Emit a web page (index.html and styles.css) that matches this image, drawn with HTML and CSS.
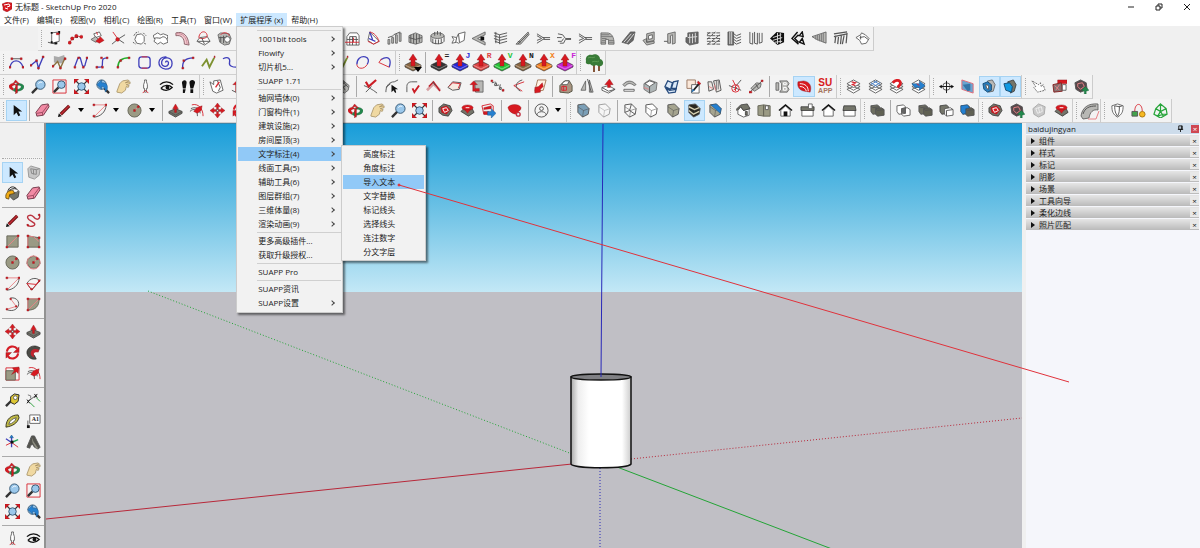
FILE: index.html
```
<!DOCTYPE html>
<html lang="zh-CN">
<head>
    <meta charset="UTF-8">
    <title>无标题 - SketchUp Pro 2020</title>
    <link rel="stylesheet" href="styles.css">
</head>
<body>

<svg class="sprite" aria-hidden="true">
    <!-- 1001bit -->
    <symbol id="rect-points" viewBox="0 0 16 16"><path class="white" d="M5 2l8-1v10l-8 2z"/><path d="M1 12l4 1 5 1"/><path class="ink" d="M4 1h2v2H4zM12 0h2v3h-2zM8 12h3v2H8zM4 11h2v2H4z"/><path class="red" d="M10 2h3v2h-3z"/></symbol>
    <symbol id="polyline" viewBox="0 0 18 16"><path class="red-line" d="M2 13l3-5 6-3 5 1"/><path class="ink" d="M4 9l2-2 1 3zM9 5h3v2H9z"/><circle class="red" cx="2" cy="13" r="2"/><circle class="red" cx="5" cy="8" r="2"/><circle class="red" cx="10" cy="5" r="2"/><circle class="red" cx="16" cy="6" r="2"/></symbol>
    <symbol id="slope" viewBox="0 0 16 16"><path class="white" d="M4 3l6-2 2 4-6 2z"/><path class="grey" d="M1 9l5-3 4 4-4 2z"/><path class="red" d="M6 11l5-5 4 4-5 3z"/><path class="red-line" d="M7 1l1 3"/></symbol>
    <symbol id="cross" viewBox="0 0 16 16"><path d="M1 14l6-5 8-5M8 9l6 4"/><path class="red-line" d="M2 1l5 7"/><circle class="red" cx="7" cy="9" r="2"/></symbol>
    <symbol id="polygon-ring" viewBox="0 0 16 16"><path class="white" d="M5 4l5-1 3 3v5l-3 3-5-1-2-4z"/><path d="M2 5l2-3 3-1M12 2l3 3M1 12l3 2M13 13l2 1" stroke-dasharray="2 1"/></symbol>
    <symbol id="sheet" viewBox="0 0 16 16"><path class="white" d="M0 5l5-3 3 2 3-1 5 2-1 4 1 3-5 2-3-2-3 2-4-3 1-2z"/><path d="M1 8c4-2 6 1 8-1s5 0 6 2"/></symbol>
    <symbol id="tube" viewBox="0 0 16 16"><path d="M1 5c6-1 9 3 9 9l5 1C14 5 9 0 1 2z" fill="#f4c9d0" stroke="#8a6068"/><path d="M1 3c8-1 11 4 12 11" stroke="#c98a96"/></symbol>
    <symbol id="dome" viewBox="0 0 16 16"><path class="white" d="M1 11l3-4 8-1 3 5-6 4z"/><path class="red-line" d="M3 7c1-8 9-8 9-1M3 7c2 2 7 1 9-1"/><path d="M2 11h13M6 7l3 7"/></symbol>
    <symbol id="ring" viewBox="0 0 16 16"><path class="grey" d="M1 4l3-2 9 1 2 5-2 6-5 1-5-3z"/><path class="red-line" d="M4 4c2-3 8-3 9 1"/><path d="M4 6v6M7 5v8M10 5v8M2 7h10"/><circle class="white" cx="11" cy="9" r="3"/></symbol>
    <symbol id="arch" viewBox="0 0 16 16"><path class="white" d="M2 15V6l3-4h8l2 3v10z"/><path d="M5 15V6h7v9M2 9h12M8 6v9"/><path class="red-line" d="M0 12h15M9 7v5"/></symbol>
    <symbol id="sail" viewBox="0 0 16 16"><path class="white" d="M4 1L2 10l6 4 6-3z"/><path class="blue-line" d="M4 1l3 8M3 8l7 3"/><path class="red-line" d="M4 1c5 1 8 5 10 10l-6 3-6-3"/></symbol>
    <symbol id="bars" viewBox="0 0 16 16"><path class="grey" d="M1 9h2v5H1zM5 7h2v6H5zM9 4h2v9H9zM13 2h2v9h-2z"/><path d="M1 7l6-2M7 4l7-3"/></symbol>
    <symbol id="columns" viewBox="0 0 16 16"><path class="grey" d="M1 5l7-3 7 3v7l-7 2-7-2z"/><path d="M3 4v9M6 3v10M9 3v11M12 4v8M1 7l7 2 7-2"/></symbol>
    <symbol id="fence" viewBox="0 0 16 16"><ellipse class="grey" cx="8" cy="5" rx="7" ry="3"/><path d="M1 5v6c1 3 12 4 14 0V5M3 8v5M6 9v5M9 9v5M12 8v5"/><path d="M5 1v4M8 0v4M11 1v4"/></symbol>
    <symbol id="panel" viewBox="0 0 16 16"><path class="white" d="M1 6l5 1 2-4 7-2-1 9-6 3-2-1-5 1 2-4z"/><path d="M6 7l-1 5M8 3l1 9"/></symbol>
    <symbol id="wedge" viewBox="0 0 16 16"><path class="grey" d="M0 8l14-7v3L6 8l8 4v3z"/><path class="ink" d="M9 6h4v4H9z"/></symbol>
    <symbol id="flights" viewBox="0 0 16 16"><path d="M1 2l6 2 8-2M1 5l6 2 8-2M1 8l6 2 8-2M2 11l6 2 7-2M3 1v12M7 4v10"/></symbol>
    <symbol id="ramp" viewBox="0 0 16 16"><path class="grey" d="M1 14L14 1l1 3L6 14z"/><path d="M3 14L14 3M3 11l3 1"/></symbol>
    <symbol id="merge" viewBox="0 0 16 16"><path d="M1 3l8 5-8 5M1 5l5 3-5 2M7 7h8M8 9h7"/></symbol>
    <symbol id="branch" viewBox="0 0 16 16"><path d="M1 3l5 1 3 4h6M1 11h4l2-3M3 13h4l2-4h6M0 7h5"/></symbol>
    <symbol id="spiral-stair" viewBox="0 0 16 16"><path class="grey" d="M1 2h6c6 0 8 5 8 12H9V9H6v5H1z"/><path d="M1 4h9M1 6h12M2 8h5M2 10h4M1 12h5M9 10h6M9 12h6" stroke="#777"/></symbol>
    <symbol id="stairs" viewBox="0 0 16 16"><path class="dark" d="M1 12L10 1h5l-2 9-5 4z"/><path class="pale-line" d="M3 12l8-9M6 13l8-10"/></symbol>
    <symbol id="frame" viewBox="0 0 16 16"><path class="grey" d="M5 3l8-2v9l-8 2zM1 10l4-2v4l8-1v2l-8 2z"/><path class="white" d="M7 5l4-1v4l-4 1z"/></symbol>
    <symbol id="door-frame" viewBox="0 0 16 16"><path class="grey" d="M5 3l8-2v12l-3 1V4L8 5v8H5z"/><path d="M1 11h4"/></symbol>
    <symbol id="window" viewBox="0 0 16 16"><path class="dark" d="M3 2l11-1v12l-9 2-4-3V7h2z"/><path class="pale-line" d="M5 3v10M8 3v10M11 2v10M3 7l10-1"/></symbol>
    <symbol id="weave" viewBox="0 0 16 16"><path d="M1 2h14M1 5h14M1 8h14M1 11h14M1 14h14M1 4l4-3M2 14L15 4M1 9l9-8M8 14l7-5" stroke-dasharray="4 1"/></symbol>
    <symbol id="louvre" viewBox="0 0 16 16"><path class="dark" d="M1 1h6v14H1z"/><path d="M6 2l4 3 5-2M6 5l4 3 5-2M6 8l4 3 5-2M6 11l4 3 5-2"/><path class="pale-line" d="M3 1v13M5 1v13"/></symbol>
    <symbol id="panels" viewBox="0 0 16 16"><path d="M2 1v12l3 1V2M7 1v12l3 1V2M12 2v11l3-1V2"/></symbol>
    <symbol id="lattice" viewBox="0 0 16 16"><path class="ink" d="M0 8l7-7 8 1v10l-7 3z"/><path class="pale-line" d="M3 7l9-3M3 10l10-3M5 12l8-1M8 2v12M11 2v11"/></symbol>
    <symbol id="lattice-open" viewBox="0 0 16 16"><path class="ink-line" d="M7 1L1 8l7 6M8 4L4 8l4 4M12 1L9 5l4 1zM12 8l-3 4 5 2z" stroke-width="1.500"/></symbol>
    <symbol id="joists" viewBox="0 0 16 16"><path class="grey" d="M0 6l15-5v12L5 9z"/><path d="M4 5v4M6 4v6M8 4v7M10 3v8M12 2v10" stroke="#777"/></symbol>
    <symbol id="rafters" viewBox="0 0 16 16"><path d="M1 3l14-2M1 6l14-3M3 5l-1 8M6 5L5 14M9 4l-1 10M12 4l-2 10M15 2l-1 11" stroke-width="1.300"/></symbol>
    <symbol id="hull" viewBox="0 0 16 16"><path class="white" d="M1 7l5-3 1-2 4 2 4 4-3 5-5 1-2-4z"/><path d="M5 7l5-1 4 3M6 5v4"/></symbol>

    <!-- curves -->
    <symbol id="curve-arc" viewBox="0 0 16 16"><path class="blue-line" d="M1 13C3 4 12 4 15 13"/><path d="M3 4h10"/><path class="red" d="M0 12h2v2H0zM14 12h2v2h-2zM2 3h2v2H2zM12 3h2v2h-2z"/></symbol>
    <symbol id="curve-zig" viewBox="0 0 16 16"><path class="blue-line" d="M1 11l6-5 2 8 5-12"/><path class="red" d="M0 10h2v2H0zM6 5h2v2H6zM8 13h2v2H8zM13 1h2v2h-2z"/></symbol>
    <symbol id="curve-smudge" viewBox="0 0 16 16"><path fill="#aaa" stroke="none" d="M2 1l5 1 6-2 1 5-4 4-8-1z"/><path d="M1 12l5-5 3 7 5-11" stroke="#8b7340" stroke-width="1.500"/><path class="red" d="M0 11h2v2H0zM8 13h2v2H8zM13 3h2v2h-2z"/></symbol>
    <symbol id="curve-wave" viewBox="0 0 16 16"><path class="blue-line" d="M2 12L5 4c1-2 3-2 3 0l2 7c1 2 3 1 3-1l2-7"/><path class="red" d="M1 12h2v2H1zM5 2h2v2H5zM10 12h2v2h-2zM14 2h2v2h-2z"/></symbol>
    <symbol id="curve-step" viewBox="0 0 16 16"><path class="blue-line" d="M3 13h3c3 0 3-2 3-5s0-5 5-5"/><path class="red" d="M2 12h2v2H2zM8 12h2v2H8zM7 2h2v2H7zM13 2h2v2h-2z"/></symbol>
    <symbol id="curve-green" viewBox="0 0 16 16"><path d="M2 13C2 7 6 3 14 3" stroke="#27b02b" stroke-width="1.500"/><path class="red" d="M1 12h2v2H1zM13 2h2v2h-2zM4 5h2v2H4z"/></symbol>
    <symbol id="curve-box" viewBox="0 0 16 16"><rect class="blue-line" x="2" y="2" width="12" height="12" rx="3"/><path class="red-line" d="M5 2h6M5 14h6"/></symbol>
    <symbol id="curve-spiral" viewBox="0 0 16 16"><path class="blue-line" d="M8 8c1-3 4-1 3 2-2 4-8 2-7-3C6 1 15 2 15 9c0 4-3 6-7 6-10-1-9-14 1-13"/></symbol>
    <symbol id="curve-quarter" viewBox="0 0 16 16"><path class="blue-line" d="M3 14C2 7 6 3 14 3"/><path class="red" d="M2 13h2v2H2zM13 2h2v2h-2zM3 5h2v2H3z"/></symbol>
    <symbol id="curve-olive" viewBox="0 0 16 16"><path d="M1 12l5-7 3 8 5-10" stroke="#7d9130" stroke-width="2"/><path class="red" d="M14 1h1v2h-1z"/></symbol>
    <symbol id="curve-tail" viewBox="0 0 16 16"><path class="blue-line" d="M1 4c6-3 8 0 7 4s4 5 7 5"/></symbol>
    <symbol id="curve-blob" viewBox="0 0 16 16"><path class="blue-line" d="M2 10C2 4 6 1 11 2c4 1 4 5 2 8"/><path class="red-line" d="M13 10c-3 6-11 5-11 0"/></symbol>
    <symbol id="curve-cone" viewBox="0 0 16 16"><path class="blue-line" d="M4 5c8-5 12-1 9 8"/><path class="red-line" d="M13 13L2 8l3-4"/></symbol>

    <!-- joint push pull: plate takes the text colour -->
    <symbol id="plate" viewBox="0 0 18 18"><path fill="currentColor" stroke="#222" stroke-width=".6" d="M1 11l8-4 8 4v2l-8 4-8-4z"/><path d="M1 11l8 4 8-4" stroke="#fff" stroke-opacity=".4"/><path class="red" d="M7 12V6H5l4-6 4 6h-2v6z"/></symbol>
    <symbol id="tree" viewBox="0 0 20 20"><path d="M10 10v9M15 11v7" stroke="#855539" stroke-width="2"/><path fill="#397b38" stroke="none" d="M2 8C1 3 5 1 8 2c3-2 8 0 8 4 4 1 4 6 1 7-2 1-4-1-5-1-2 2-5 0-6-1-3 1-5-1-4-3z"/><path d="M4 5c3-2 4 1 7-1M8 9c3-2 5 1 7-1" stroke="#5c9c53"/></symbol>

    <!-- camera -->
    <symbol id="orbit" viewBox="0 0 16 16"><path class="green" d="M8 5c4-1 8 1 8 3 0 4-5 5-8 5l1 2-5-3 4-4v3c3 0 5-1 5-3 0-1-3-2-5-1z"/><path class="red" d="M9 4C3 4 0 6 0 8c0 2 2 3 4 4l1-2C1 8 4 6 9 6zM7 1l4 4-2 1v8l-2 2V6L5 4z"/></symbol>
    <symbol id="zoom" viewBox="0 0 16 16"><path d="M1 15l6-6" stroke="#333" stroke-width="2.500"/><circle class="sky" cx="10" cy="6" r="5"/><path d="M8 5c1-2 3-2 4-1" stroke="#fff"/></symbol>
    <symbol id="zoom-window" viewBox="0 0 16 16"><path class="red-line" d="M1 1h14v14H1z"/><path d="M2 14l5-5" stroke="#333" stroke-width="2.500"/><circle class="sky" cx="10" cy="6" r="4"/></symbol>
    <symbol id="extents" viewBox="0 0 16 16"><path d="M2 14l5-5M14 14l-4-4M2 2l4 4M14 2l-4 4" stroke="#333" stroke-width="1.500"/><circle class="sky" cx="8" cy="8" r="4"/><path class="red" d="M0 0h5L0 5zM16 0v5l-5-5zM16 16h-5l5-5zM0 16v-5l5 5z"/></symbol>
    <symbol id="previous" viewBox="0 0 16 16"><path d="M9 9l6 6" stroke="#333" stroke-width="2.500"/><circle class="sky" cx="7" cy="6" r="5"/><path class="blue" d="M2 6l5-5v3c5 0 7 2 6 7l-2 3c0-4-1-6-4-6v3z"/></symbol>
    <symbol id="pan" viewBox="0 0 16 16"><path fill="#f0d9a2" stroke="#a08a5c" stroke-width=".8" d="M1 13l3-8 3-3 6-1 1 1-4 2 5-1v2l-4 1 3 1-1 2-2-1-1 4-4 3-5-1z"/></symbol>
    <symbol id="camera" viewBox="0 0 16 16"><path class="white" d="M7 1h2v2l1 3v4H9v4H7v-4H6V6l1-3z"/><path class="red-line" d="M5 15l3-3 3 3"/></symbol>
    <symbol id="eye" viewBox="0 0 16 16"><path class="ink-line" d="M1 6c4-4 10-4 14 0M2 10c3-4 9-4 12-1-4 4-8 4-12 1" stroke-width="1.400"/><circle class="ink" cx="9" cy="9" r="2"/></symbol>
    <symbol id="feet" viewBox="0 0 16 16"><path class="ink" d="M1 4c0-3 5-4 5 0L5 10H2zM2 11h3l-1 4H2zM9 4c0-4 6-4 6 0l-2 6h-3zM10 11h3v4h-3z"/></symbol>

    <!-- basic tools -->
    <symbol id="select" viewBox="0 0 16 16"><path class="ink" d="M5 2v11l3-3 2 4 2-1-2-4h4z"/></symbol>
    <symbol id="eraser" viewBox="0 0 16 16"><path fill="#f28aa4" stroke="#713848" d="M1 10l6-8 7-1 1 3-6 9-7 1z"/><path d="M2 11l6-1 6-8M8 10v3" stroke="#9c4a60"/></symbol>
    <symbol id="pencil" viewBox="0 0 16 16"><path d="M4 12l9-9" stroke="#611" stroke-width="3.500"/><path d="M4 12l9-9" stroke="#c52b35" stroke-width="1.500"/><path class="ink" d="M1 15l1-4 3 3z"/></symbol>
    <symbol id="freehand" viewBox="0 0 16 16"><path d="M1 12c2 4 10 2 8-1L3 7c-4-4 2-6 5-3 4 5 8 2 6-3" stroke="#bb3440" stroke-width="1.500"/><circle class="red" cx="14" cy="2" r="1"/><circle class="red" cx="2" cy="13" r="1"/></symbol>
    <symbol id="arc" viewBox="0 0 16 16"><path d="M15 2c0 8-7 13-13 13"/><path class="pink-line" d="M2 2h13L2 15"/><path class="red" d="M1 1h2v2H1zM14 1h2v2h-2zM1 13h2v2H1z"/></symbol>
    <symbol id="arc-fan" viewBox="0 0 16 16"><path d="M1 8c3-6 10-7 14-3L6 15z"/><path class="red-line" d="M6 15L1 8l10 1 4-5M6 15l9-11"/><circle class="red" cx="6" cy="14" r="1"/><circle class="red" cx="14" cy="5" r="1"/></symbol>
    <symbol id="arc-three" viewBox="0 0 16 16"><path d="M6 1c7-1 10 5 8 9s-7 6-13 3"/><path class="pink-line" d="M6 2l6 8-10 3"/><circle class="red" cx="6" cy="2" r="1"/><circle class="red" cx="12" cy="10" r="1"/><circle class="red" cx="2" cy="13" r="1"/></symbol>
    <symbol id="pie" viewBox="0 0 16 16"><path class="stone" d="M2 2h12c0 8-4 12-12 12z"/><path class="pink-line" d="M2 14L14 2H2z"/><path class="red" d="M1 1h2v2H1zM13 1h2v2h-2zM1 13h2v2H1z"/></symbol>
    <symbol id="rectangle" viewBox="0 0 16 16"><path class="stone" d="M2 2h12v12H2z"/><path class="pink-line" d="M2 14L14 2"/><path class="red" d="M1 13h2v2H1zM13 1h2v2h-2z"/></symbol>
    <symbol id="rotated-rect" viewBox="0 0 16 16"><path class="stone" d="M2 2l12 2v10H2z"/><path class="pink-line" d="M2 14V2l6 1 6 5"/><path class="red" d="M1 1h2v2H1zM13 3h2v2h-2zM1 13h2v2H1zM13 13h2v2h-2z"/></symbol>
    <symbol id="circle" viewBox="0 0 16 16"><circle class="stone" cx="8" cy="8" r="7"/><path class="pink-line" d="M8 8l4-4"/><path class="red" d="M7 7h2v2H7zM11 3h2v2h-2z"/></symbol>
    <symbol id="polygon" viewBox="0 0 16 16"><path class="stone" d="M2 4l6-3 6 3 1 5-4 5H5L1 9z"/><circle class="pink-line" cx="8" cy="8" r="7"/><path class="pink-line" d="M8 8l4-4"/><path class="red" d="M7 7h2v2H7zM11 3h2v2h-2z"/></symbol>
    <symbol id="push" viewBox="0 0 16 16"><path class="dark-stone" d="M1 9l7-3 7 3v2l-7 4-7-4z"/><path d="M1 9l7 4 7-4"/><path class="red" d="M7 10V6H5l3-5 3 5H9v4z"/></symbol>
    <symbol id="follow" viewBox="0 0 16 16"><path class="red-line" d="M3 2c7-2 12 4 12 12"/><path d="M1 9c4-4 8-2 8 5M2 6c4-2 9-1 10 5"/><path class="red" d="M5 9l3-4 6-2-1 5-4 3z"/></symbol>
    <symbol id="follow-me" viewBox="0 0 16 16"><path fill="#4b4b46" stroke="#222" stroke-width=".6" d="M15 3C8-2 0 3 1 9c1 5 6 7 10 6l-2-4c-4-3 0-6 4-4z"/><path fill="#c3242f" stroke="none" d="M14 5c-6-2-9 0-9 4 0 2 2 4 4 4-2-4 0-6 4-5z"/></symbol>
    <symbol id="move" viewBox="0 0 16 16"><path class="red" d="M8 0l3 4H9v3h3V5l4 3-4 3V9H9v3h2l-3 4-3-4h2V9H4v2L0 8l4-3v2h3V4H5z"/><circle class="white" cx="8" cy="8" r="1"/></symbol>
    <symbol id="rotate" viewBox="0 0 16 16"><path d="M2 7c1-6 8-7 11-3M14 9c-1 6-8 7-11 3" stroke="#d51d26" stroke-width="2.300"/><path class="red" d="M15 2v6H9zM1 14V8h6z"/></symbol>
    <symbol id="scale" viewBox="0 0 16 16"><path class="red-line" d="M1 2h14v13H1z"/><path class="stone" d="M1 5h10v10H1z"/><path class="red" d="M7 9l3-4-2-3 7-1-1 7-2-2z"/></symbol>
    <symbol id="paint" viewBox="0 0 16 16"><path class="dark-stone" d="M5 4l6-2 4 4-1 6-5 3-4-4z"/><ellipse class="white" cx="10" cy="5" rx="4" ry="2"/><path d="M3 7C3 1 9-1 12 3" stroke="#222"/><path fill="#f2ac15" stroke="#543d10" stroke-width=".8" d="M9 5C3 4 0 8 1 13l3 1 1-5 5-1z"/></symbol>
    <symbol id="component" viewBox="0 0 16 16"><path fill="#c7c7c7" stroke="#999" d="M2 4l3-3 10 3-1 7-5 4-6-2z"/><path d="M5 4l6 1v5l-5-1zM8 5v5M11 5l3-1" stroke="#888"/></symbol>
    <symbol id="tape" viewBox="0 0 16 16"><path d="M1 14l6-6" stroke="#333" stroke-width="2.500"/><path fill="#ddc734" stroke="#222" d="M6 4l4-3 5 1-1 7-4 3-4-2z"/><circle class="white" cx="11" cy="5" r="2"/></symbol>
    <symbol id="dimension" viewBox="0 0 16 16"><path d="M2 9l8-6"/><path d="M4 10l5 5M11 5l4 4" stroke="#28a13a"/><path class="ink-line" d="M1 7l3 4M1 11l3-4M9 1l3 4M9 5l3-4"/><path d="M2 2l3 1v3" stroke="#777"/></symbol>
    <symbol id="protractor" viewBox="0 0 16 16"><path fill="#c1ba46" stroke="#36331a" d="M1 14C1 5 7 1 14 1l1 3c-2 6-7 9-14 10z"/><path class="white" d="M4 11c1-4 4-6 8-7-1 4-4 6-8 7z"/></symbol>
    <symbol id="text" viewBox="0 0 16 16"><path class="white" d="M4 1h11v9H4z"/><path d="M2 7v7"/><path class="ink" d="M1 12h3v3H1z"/></symbol>
    <symbol id="axes" viewBox="0 0 16 16"><path class="blue-line" d="M7 1v12M1 4l6 4"/><path class="red-line" d="M7 8l7 5M1 11l6-3"/><path d="M7 8l7-3" stroke="#27a95b" stroke-width="1.500"/><path class="ink" d="M6 6h3v3H6z"/><path class="blue" d="M5 3l2-3 2 3z"/></symbol>
    <symbol id="text-3d" viewBox="0 0 16 16"><path fill="#53534d" d="M1 13L6 1h3l6 12-2 2-4-2-2-3-2 1-1 3z"/><path fill="#8c8c80" stroke="none" d="M6 2l2 5 5 7-2 1-4-7z"/></symbol>

    <!-- suapp -->
    <symbol id="pages" viewBox="0 0 16 16"><path class="white" d="M1 3l4 3V2l7-1 3 11-7 3-4-2z"/><path d="M9 2l3 7-2 4"/><path class="red-line" d="M11 3L7 9" stroke-width="1.500"/></symbol>
    <symbol id="raise" viewBox="0 0 16 16"><path class="red" d="M6 14V6H3l5-5 5 5h-3v8z"/><path d="M2 12l4 2 8-2"/></symbol>
    <symbol id="mesh" viewBox="0 0 16 16"><path class="grey" d="M1 5l6-4 7 6-1 5-4 3-8-5z"/><path d="M4 4l6 8M7 2l6 7M2 8l7-4M4 11l8-5"/></symbol>
    <symbol id="check-line" viewBox="0 0 16 16"><path d="M1 7c5 2 9 4 14 8M3 14l6-6"/><path d="M3 3l3 5 8-7" stroke="#cb1d25" stroke-width="2.300"/></symbol>
    <symbol id="arc-select" viewBox="0 0 16 16"><path d="M2 14C2 8 5 3 11 3l4-2M2 9l5-4"/><path class="ink" d="M8 6v8l2-2 2 3 1-1-1-3h3z"/></symbol>
    <symbol id="arc-check" viewBox="0 0 16 16"><path d="M2 14V8c0-4 3-5 5-5h6"/><path d="M8 10l2 4 5-7" stroke="#cb1d25" stroke-width="2"/></symbol>
    <symbol id="roof-line" viewBox="0 0 16 16"><path d="M1 12l7-7 7 7" stroke="#d7a2a5" stroke-width="3"/><path d="M3 8l5-5 7 10" stroke="#bd1e28" stroke-width="1.500"/><path d="M7 3l3 4"/></symbol>
    <symbol id="face" viewBox="0 0 16 16"><path fill="#f7eadf" stroke="#555" d="M1 9l5-6 9 1-2 7-7 1z"/><path class="red-line" d="M2 8l4-4 8 1-2 5"/></symbol>
    <symbol id="flip" viewBox="0 0 16 16"><path class="grey" d="M6 2h9v12H7z"/><path class="red" d="M1 6l4-4 4 4H6v4h5v3H4V6z"/></symbol>
    <symbol id="chain" viewBox="0 0 16 16"><path d="M2 4l4-1 1 4 4-1-1 4 4 3" stroke-dasharray="3 1"/><path class="red" d="M1 1h2v2H1zM13 11h2v2h-2z"/><path d="M5 5h2v2H5zM10 9h2v2h-2z"/></symbol>
    <symbol id="angle" viewBox="0 0 16 16"><path class="red-line" d="M14 3L3 7l9 6"/><path d="M12 1c-7 2-9 8-2 12"/></symbol>
    <symbol id="drop-face" viewBox="0 0 16 16"><path fill="#fff2e5" stroke="#a57757" d="M6 1h9l-3 11-9 1z"/><path class="red" d="M3 9l4-1 4-4 1 4-3 3v3l-6 1z"/></symbol>
    <symbol id="block" viewBox="0 0 16 16"><path fill="#a99582" stroke="#554" d="M2 7l5-5h5l3 5v6l-4 2-9-1z"/><path class="white" d="M5 4l3-2h4l-2 4H4z"/><path class="red-line" d="M4 8h5v4H4zM6 7v6"/></symbol>
    <symbol id="mirror" viewBox="0 0 16 16"><path class="grey" d="M1 12L6 2v10zM10 1l4 13h-4z"/><path d="M8 0l4 14"/></symbol>
    <symbol id="lift" viewBox="0 0 16 16"><path class="white" d="M1 9l7-2 7 4-7 4-7-3z"/><path d="M1 9l7 4 7-2"/><path class="red" d="M7 9V6H4l5-6 4 6h-3v3z"/></symbol>
    <symbol id="bend" viewBox="0 0 16 16"><path class="grey" d="M1 6c4-5 10-5 14 0l-2 1C9 4 6 4 3 8z"/><path class="white" d="M2 11h11v2H2z"/></symbol>
    <symbol id="round-box" viewBox="0 0 16 16"><path fill="#aeb6b7" stroke="#777" d="M1 5l6-4 8 3-1 8-7 3-6-4z"/><path class="white" d="M2 5l5-3 6 2-6 4z"/><path d="M7 8v7"/><path class="pink-line" d="M1 9l5 2"/></symbol>
    <symbol id="tiles" viewBox="0 0 16 16"><path fill="#dceaf9" stroke="#274b7d" stroke-width="1.300" d="M1 8l3-6 5 2-2 7zM8 10l2-7 5-1-2 8zM2 10l4 2 7-1-1 3-7 1z"/></symbol>
    <symbol id="swap" viewBox="0 0 16 16"><path fill="#fbe8d9" stroke="#9a7864" d="M1 1h9v9H1z"/><path class="white" d="M6 6h8v9H6z"/><path d="M8 12l6-7" stroke="#222" stroke-width="2"/><path class="red" d="M13 2l3 3-2 1-2-2z"/><path class="blue" d="M7 11l2 1-3 2z"/></symbol>
    <symbol id="books" viewBox="0 0 16 16"><path fill="#ece8e3" d="M1 3h4l2 8-5 2zM7 2l6-1 2 11-5 2z"/><path d="M10 2v10M12 2v9" stroke="#777"/><path class="pink-line" d="M2 8l4 2M8 6l1 6"/></symbol>
    <symbol id="north" viewBox="0 0 16 16"><path d="M1 7l13 5M8 8l6-7"/><circle class="red-line" cx="8" cy="10" r="4"/><path class="red-line" d="M8 7v6M6 12l4-4M5 1l3 6"/></symbol>
    <symbol id="pin-line" viewBox="0 0 16 16"><path class="grey" d="M2 10l6-6 5 1-1 4-6 4z"/><path d="M1 14L14 2M7 5l3 5"/><path class="red" d="M0 13h3v2H0zM13 1h2v2h-2z"/></symbol>
    <symbol id="letter-b" viewBox="0 0 16 16"><path class="grey" d="M1 4h3v8H1zM5 2h8l2 3-2 3 2 3-2 3H5l2-3V5z"/><path d="M9 4h3v2H9zM9 9h3v3H9z" stroke="#fff"/></symbol>
    <symbol id="suapp" viewBox="0 0 16 16"><path class="red" d="M1 3l6-1c7 1 9 6 7 12l-6-1C2 12 0 8 1 3z"/><path d="M3 5c6 0 9 3 9 8M3 8c4 0 6 2 7 5" stroke="#fff"/></symbol>
    <symbol id="stack" viewBox="0 0 16 16"><path class="white" d="M1 11l7-3 7 3-7 4zM1 8l7-3 7 3-7 4z"/><path class="white" d="M1 5l7-4 7 4-7 4z"/></symbol>
    <symbol id="stack-red" viewBox="0 0 16 16"><use href="#stack"/><path class="red-line" d="M6 3l4 1-3 2 3 1" stroke-width="1.500"/></symbol>
    <symbol id="stack-grid" viewBox="0 0 16 16"><use href="#stack"/><path d="M3 4l7 4M6 2l7 4M3 6l7-4M6 8l7-4" stroke="#4d7fc0"/></symbol>
    <symbol id="stack-bend" viewBox="0 0 16 16"><use href="#stack"/><path d="M4 4c6-6 12 0 5 5" stroke="#dc1d24" stroke-width="3"/></symbol>
    <symbol id="stack-arrow" viewBox="0 0 16 16"><use href="#stack"/><path class="blue" d="M1 5h8V2l6 5-6 5V9H4z"/><path class="red-line" d="M6 5l3 2"/></symbol>

    <!-- sections -->
    <symbol id="section" viewBox="0 0 16 16"><circle cx="8" cy="8" r="4"/><path class="ink-line" d="M1 8h14M8 2v13"/><path class="ink" d="M0 8l3-2v4zM16 8l-3-2v4z"/></symbol>
    <symbol id="section-plane" viewBox="0 0 16 16"><path fill="#6aa5d0" stroke="#e16c79" d="M2 1l12 4v10L2 11z"/><path fill="#3475a7" stroke="none" d="M3 6l8-1v7l-3 1z"/></symbol>
    <symbol id="section-cut" viewBox="0 0 16 16"><path class="grey" d="M6 2l5-1 3 5-2 7-5 1z"/><path fill="#2a7fc0" stroke="#164d76" d="M1 5l5-2 4 3v6l-4 2-4-3z"/><path class="white" d="M4 6l3 1v4l-2-1z"/></symbol>
    <symbol id="section-fill" viewBox="0 0 16 16"><path class="dark-stone" d="M5 3l6-2 3 5-2 7-4 2z"/><path fill="#1099e1" stroke="#164d76" d="M1 5l6-1 3 4-1 6-6-2z"/></symbol>

    <symbol id="gem-group" viewBox="0 0 16 16"><path class="dark-stone" d="M1 5l5-4 7 2 2 5-4 6-6-1-4-3z"/><path class="red" d="M3 5l6-2 4 4-4 5-5-2z"/><path d="M5 6l4-1 2 3-4 2z" stroke="#fff"/></symbol>
    <symbol id="gem-disc" viewBox="0 0 16 16"><path class="dark-stone" d="M1 9l3-3h9l2 4-6 4z"/><ellipse class="red" cx="8" cy="5" rx="6" ry="3"/><path class="red" d="M5 7h6l-3 4z"/><path d="M6 5h4" stroke="#fff"/></symbol>
    <symbol id="share" viewBox="0 0 16 16"><path class="red-line" d="M1 3l9-2 3 2v9H3z"/><path class="red" d="M3 5l8-2v3L3 7zM3 9h5v3H3z"/><path class="blue" d="M7 9h4V6l5 5-5 5v-3H7z"/></symbol>
    <symbol id="gem-cog" viewBox="0 0 16 16"><path class="red" d="M1 5c1-4 12-5 14 0 0 3-3 4-6 7-4-1-7-3-8-7z"/><circle cx="12" cy="12" r="2" fill="#eee" stroke="#c33344" stroke-width="1.500"/></symbol>
    <symbol id="user" viewBox="0 0 16 16"><circle cx="8" cy="8" r="7"/><circle cx="8" cy="6" r="2"/><path d="M3 13c0-5 10-5 10 0"/></symbol>
    <symbol id="gem-plus" viewBox="0 0 16 16"><path fill="#57474a" d="M1 4l6-3 6 3 1 7-7 3-5-3z"/><path class="pink-line" d="M4 5l5-1 2 4-4 3-3-3z"/><path class="green" d="M8 12l4-4 4 4-3 1v3h-2v-3z"/></symbol>
    <symbol id="gem-grey" viewBox="0 0 16 16"><path fill="#c9c9c9" stroke="#aaa" d="M1 6l6-5 7 3-1 8-6 3-5-3z"/><path d="M4 6l6-2 1 5-5 2zM7 5l1 5" stroke="#eee"/></symbol>
    <symbol id="snap" viewBox="0 0 16 16"><path class="white" stroke-dasharray="2 1" d="M1 2l4 6-2 1 4 5 8-2-2-6-2 2-1-4-2 2z"/></symbol>
    <symbol id="calendar" viewBox="0 0 16 16"><path class="red" d="M6 1h10v4H6z"/><path fill="#857070" stroke="#822" d="M1 6l9-2 1 9-9 1z"/><path class="white" d="M11 6h4v6h-4z"/><path class="pink-line" d="M3 7l5 5M8 6l-4 6"/></symbol>

    <!-- styles, views, solids -->
    <symbol id="style-cube" viewBox="0 0 16 16"><path fill="currentColor" stroke="#555" d="M2 2l7-1 5 5-1 6-6 3-5-5z"/><path d="M2 4l6 4-1 7M8 8l6-2" stroke="#444" stroke-opacity=".5"/></symbol>
    <symbol id="style-xray" viewBox="0 0 16 16"><use href="#style-cube" color="#7b9fb7"/></symbol>
    <symbol id="style-back" viewBox="0 0 16 16"><g opacity=".55"><use href="#style-cube" color="#fafafa"/></g></symbol>
    <symbol id="style-wire" viewBox="0 0 16 16"><use href="#style-cube" color="#f8f8f8"/><path d="M9 1L7 8l-5 2M7 8l6 4"/></symbol>
    <symbol id="style-hidden" viewBox="0 0 16 16"><use href="#style-cube" color="#fff"/></symbol>
    <symbol id="style-shaded" viewBox="0 0 16 16"><use href="#style-cube" color="#a5a48f"/></symbol>
    <symbol id="style-texture" viewBox="0 0 16 16"><use href="#style-cube" color="#292620"/><path d="M2 4l6 3 5-2M2 8l5 4 6-3" stroke="#d6cfb1" stroke-width="1.500"/></symbol>
    <symbol id="style-mono" viewBox="0 0 16 16"><use href="#style-cube" color="#a5a48f"/><path class="blue" d="M3 2l6-1 5 5-1 5z"/></symbol>
    <symbol id="house-iso" viewBox="0 0 16 16"><path class="white" d="M2 8l3-4 3 4 6-2v7l-6 2-6-3z"/><path class="dark-stone" d="M0 7l5-5 7-1 3 5-7 2-3-4-4 4zM10 9h2v4h-2z"/></symbol>
    <symbol id="house-top" viewBox="0 0 16 16"><path class="stone" d="M1 3l6-1v12l-6-1zM7 2l7 1v11H7z"/><path class="white" d="M9 3h3v4H9z"/></symbol>
    <symbol id="house-front" viewBox="0 0 16 16"><path class="white" d="M3 8l5-5 5 5v6H3z"/><path class="ink-line" d="M1 8l7-6 7 6" stroke-width="1.500"/><path class="ink" d="M6 9h4v5H6z"/></symbol>
    <symbol id="house-right" viewBox="0 0 16 16"><path class="white" d="M2 7h12v7H2z"/><path class="dark-stone" d="M1 4h14v4H1z"/><path class="white" d="M9 1h4v5H9z"/></symbol>
    <symbol id="house-back" viewBox="0 0 16 16"><path class="white" d="M3 8l5-5 5 5v6H3z"/><path class="ink-line" d="M1 8l7-6 7 6" stroke-width="1.500"/></symbol>
    <symbol id="house-left" viewBox="0 0 16 16"><path class="white" d="M2 7h12v7H2z"/><path class="dark-stone" d="M2 3h12l1 5H1z"/></symbol>
    <symbol id="solid" viewBox="0 0 16 16"><path fill="#6d6e60" d="M1 3l7-1 2 2v7l-7 1-2-3z"/><path fill="#606153" d="M6 6l6-1 3 2v6l-7 1-2-2z"/><path d="M1 3l2 2 7-1M6 6l2 2 7-1"/></symbol>
    <symbol id="solid-open" viewBox="0 0 16 16"><path class="white" d="M1 3l7-1 2 2v7l-7 1-2-3zM6 6l6-1 3 2v6l-7 1-2-2z"/><path class="dark" d="M6 6l4-1v6l-4-1z"/></symbol>
    <symbol id="solid-half" viewBox="0 0 16 16"><path class="dark-stone" d="M1 3l7-1 2 2v7l-7 1-2-3z"/><path class="white" d="M6 6l6-1 3 2v6l-7 1-2-2z"/><path d="M8 8l7-1M8 8v6"/></symbol>
    <symbol id="solid-blue" viewBox="0 0 16 16"><use href="#solid"/><path class="blue" d="M1 3l7-1 2 3-4 1v5l-3 1-2-3z"/></symbol>
    <symbol id="sandbox" viewBox="0 0 20 18"><path class="grey" d="M1 14C2 6 8 1 18 2v6c-5-1-8 2-9 8L3 17z"/><path d="M3 12c2-6 6-8 13-8"/><path class="pink-line" d="M8 17h8l3-8"/></symbol>
    <symbol id="shield" viewBox="0 0 16 16"><path class="white" d="M2 3l6-2 6 2c0 6-1 9-6 12C3 12 2 9 2 3z"/><path d="M5 3c0 6 1 8 3 11M10 3c0 5 0 8-2 11M5 3l5 1 3-1"/></symbol>
    <symbol id="link-nodes" viewBox="0 0 16 16"><path class="red-line" d="M4 9C4-1 12-1 12 9"/><path fill="#43a34c" d="M1 9h6v5H1z"/><circle cx="12" cy="12" r="3" fill="#f6b821" stroke="#a97812"/></symbol>
    <symbol id="wire-gem" viewBox="0 0 16 16"><path d="M8 1l6 5 1 6-7 4-7-4 2-6zM3 6l5 3 6-3M8 9l-3 5M8 9l3 5M1 12l4 2 6-2 4 0M8 1v8" stroke="#26a53a" stroke-width="1.300"/></symbol>
</svg>

<header class="title-bar">
    <svg class="logo" viewBox="0 0 10 10" aria-hidden="true"><path class="red" d="M0 2l5-2 5 1v6L5 10 1 8V5z"/><path d="M2 3l5-1 1 2-3 1M3 6l3 1" stroke="#fff"/></svg>
    <h1>无标题 - SketchUp Pro 2020</h1>
    <div class="window-controls">
        <button aria-label="最小化"><svg viewBox="0 0 8 8"><path d="M1 4h6"/></svg></button>
        <button aria-label="还原"><svg viewBox="0 0 8 8"><path d="M1 3h4v4H1zM3 3V1h4v4H5"/></svg></button>
        <button aria-label="关闭"><svg viewBox="0 0 8 8"><path d="M1 1l6 6M7 1L1 7"/></svg></button>
    </div>
</header>

<nav class="menu-bar">
    <button>文件(F)</button>
    <button>编辑(E)</button>
    <button>视图(V)</button>
    <button>相机(C)</button>
    <button>绘图(R)</button>
    <button>工具(T)</button>
    <button>窗口(W)</button>
    <div class="menu-bar__open">
        <button class="menu-bar__item--selected" aria-expanded="true">扩展程序 (x)</button>
        <div class="menu">
            <hr>
            <button class="menu__item menu__item--parent">1001bit tools</button>
            <button class="menu__item menu__item--parent">Flowify</button>
            <button class="menu__item menu__item--parent">切片机5...</button>
            <button class="menu__item">SUAPP 1.71</button>
            <hr>
            <button class="menu__item menu__item--parent">轴网墙体(0)</button>
            <button class="menu__item menu__item--parent">门窗构件(1)</button>
            <button class="menu__item menu__item--parent">建筑设施(2)</button>
            <button class="menu__item menu__item--parent">房间屋顶(3)</button>
            <div class="menu__group">
                <button class="menu__item menu__item--parent menu__item--selected">文字标注(4)</button>
                <div class="menu menu--sub">
                    <button class="menu__item">高度标注</button>
                    <button class="menu__item">角度标注</button>
                    <button class="menu__item menu__item--selected">导入文本</button>
                    <button class="menu__item">文字替换</button>
                    <button class="menu__item">标记线头</button>
                    <button class="menu__item">选择线头</button>
                    <button class="menu__item">连注数字</button>
                    <button class="menu__item">分文字层</button>
                </div>
            </div>
            <button class="menu__item menu__item--parent">线面工具(5)</button>
            <button class="menu__item menu__item--parent">辅助工具(6)</button>
            <button class="menu__item menu__item--parent">图层群组(7)</button>
            <button class="menu__item menu__item--parent">三维体量(8)</button>
            <button class="menu__item menu__item--parent">渲染动画(9)</button>
            <hr>
            <button class="menu__item">更多高级插件...</button>
            <button class="menu__item">获取升级授权...</button>
            <hr>
            <button class="menu__item">SUAPP Pro</button>
            <hr>
            <button class="menu__item">SUAPP资讯</button>
            <button class="menu__item menu__item--parent">SUAPP设置</button>
        </div>
    </div>
    <button>帮助(H)</button>
</nav>

<!-- data-tools: "|" separator, "*" pressed, "+" drop-down arrow, "name:X" a text on the button -->
<div class="toolbars">
    <div class="toolbar-row toolbar-row--bit">
        <div class="toolbar" data-tools="rect-points polyline slope cross polygon-ring sheet tube dome ring frame panels mesh bars columns arch sail bars columns fence panel wedge flights ramp merge branch merge spiral-stair stairs frame door-frame window weave louvre panels lattice lattice-open joists rafters hull"></div>
    </div>
    <div class="toolbar-row toolbar-row--curves">
        <div class="toolbar" data-tools="curve-arc curve-zig curve-smudge curve-wave curve-step curve-green curve-box curve-spiral curve-quarter curve-olive curve-tail curve-zig curve-wave | curve-arc curve-box curve-olive curve-blob curve-cone"></div>
        <div class="toolbar" data-tools="plate | plate:= plate:J plate:R plate:V plate:N plate:X plate:F"></div>
        <div class="toolbar" data-tools="tree"></div>
    </div>
    <div class="toolbar-row toolbar-row--suapp">
        <div class="toolbar" data-tools="orbit zoom zoom-window extents previous pan camera eye feet"></div>
        <div class="toolbar" data-tools="pages raise flip face tiles block mesh | check-line arc-select arc-check roof-line face flip chain angle drop-face | block mirror lift bend round-box tiles swap books north pin-line | letter-b suapp* wordmark:SU"></div>
        <div class="toolbar" data-tools="stack-red stack-grid stack-bend stack-arrow"></div>
        <div class="toolbar" data-tools="section section-plane section-cut* section-fill*"></div>
        <div class="toolbar" data-tools="snap calendar gem-plus"></div>
    </div>
    <div class="toolbar-row toolbar-row--main">
        <div class="toolbar" data-tools="select* | eraser pencil+ arc+ circle+ | push follow move rotate scale | tape text paint | orbit pan zoom extents | gem-group gem-disc share | gem-cog | user+"></div>
        <div class="toolbar" data-tools="style-xray style-back | style-wire style-hidden style-shaded style-texture* style-mono"></div>
        <div class="toolbar" data-tools="house-iso house-top house-front house-right house-back house-left"></div>
        <div class="toolbar" data-tools="solid | solid-open solid solid-half solid-blue"></div>
        <div class="toolbar" data-tools="gem-group gem-plus gem-grey gem-disc"></div>
        <div class="toolbar" data-tools="sandbox"></div>
        <div class="toolbar" data-tools="shield link-nodes wire-gem"></div>
    </div>
</div>

<main class="workspace">
    <aside class="side-tools">
        <div class="toolbar toolbar--side" data-tools="select* component paint eraser | pencil freehand rectangle rotated-rect circle polygon arc arc-fan arc-three pie | move push rotate follow-me scale follow | tape dimension protractor text:A1 axes text-3d | orbit pan zoom zoom-window extents previous | camera eye"></div>
    </aside>

    <section class="viewport" aria-label="模型">
        <svg class="scene" viewBox="46 123 976 425" preserveAspectRatio="xMinYMin slice">
            <defs>
                <linearGradient id="sky" x2="0" y2="1">
                    <stop offset="0" stop-color="#189dd9"/>
                    <stop offset=".5" stop-color="#6bc1e5"/>
                    <stop offset="1" stop-color="#c3e8f6"/>
                </linearGradient>
                <linearGradient id="side">
                    <stop offset="0" stop-color="#aaa"/>
                    <stop offset=".12" stop-color="#eee"/>
                    <stop offset=".3" stop-color="#fff"/>
                    <stop offset=".85" stop-color="#fff"/>
                    <stop offset="1" stop-color="#ccc"/>
                </linearGradient>
            </defs>
            <rect x="46" y="123" width="976" height="168" fill="url(#sky)" stroke="none"/>
            <rect x="46" y="291" width="976" height="257" fill="#c0bfc5" stroke="none"/>
            <path class="axis axis--green axis--dotted" d="M148 290l424 163"/>
            <path class="axis axis--red axis--dotted" d="M631 458l391-41"/>
            <path class="axis axis--blue axis--dotted" d="M600 467v81"/>
            <path class="axis axis--red" d="M46 518l526-55"/>
            <path class="axis axis--green" d="M617 466l215 82"/>
            <path d="M571 376v87c2 5 57 5 60 0v-87z" fill="url(#side)" stroke="#111" stroke-width="1.500"/>
            <ellipse cx="601" cy="376" rx="30" ry="3" fill="#808084" stroke="#111" stroke-width="1.300"/>
            <path class="axis axis--blue" d="M603 123l-2 253"/>
        </svg>
    </section>

    <aside class="tray">
        <div class="tray__header">
            <h2>baidujingyan</h2>
            <button class="tray__pin" aria-label="固定"><svg viewBox="0 0 8 8"><path d="M2 1h4v4H2zM5 1v4M1 5h6M4 5v3"/></svg></button>
            <button class="tray__close" aria-label="关闭">×</button>
        </div>
        <div class="tray__item"><button class="tray__title">组件</button><button class="tray__x" aria-label="关闭组件">×</button></div>
        <div class="tray__item"><button class="tray__title">样式</button><button class="tray__x" aria-label="关闭样式">×</button></div>
        <div class="tray__item"><button class="tray__title">标记</button><button class="tray__x" aria-label="关闭标记">×</button></div>
        <div class="tray__item"><button class="tray__title">阴影</button><button class="tray__x" aria-label="关闭阴影">×</button></div>
        <div class="tray__item"><button class="tray__title">场景</button><button class="tray__x" aria-label="关闭场景">×</button></div>
        <div class="tray__item"><button class="tray__title">工具向导</button><button class="tray__x" aria-label="关闭工具向导">×</button></div>
        <div class="tray__item"><button class="tray__title">柔化边线</button><button class="tray__x" aria-label="关闭柔化边线">×</button></div>
        <div class="tray__item"><button class="tray__title">照片匹配</button><button class="tray__x" aria-label="关闭照片匹配">×</button></div>
    </aside>
</main>

<svg class="pointer" viewBox="0 0 1200 548" preserveAspectRatio="xMinYMin meet" aria-hidden="true">
    <path d="M399 185l670 197"/>
    <circle cx="399" cy="185" r="1"/>
</svg>

<script>
    const SVG = 'http://www.w3.org/2000/svg'

    function createIcon(name) {
        const svg = document.createElementNS(SVG, 'svg')
        const use = document.createElementNS(SVG, 'use')
        svg.setAttribute('class', 'icon icon--' + name)
        use.setAttribute('href', '#' + name)
        svg.appendChild(use)
        return svg
    }

    function createTool(token) {
        if (token === '|') {
            const line = document.createElement('span')
            line.className = 'toolbar__separator'
            return line
        }
        const [name, mark] = token.replace(/[*+]$/, '').split(':')
        const button = document.createElement('button')
        button.className = 'tool tool--' + name
        button.setAttribute('aria-label', name)
        if (name !== 'wordmark') {
            button.appendChild(createIcon(name))
        }
        if (token.endsWith('*')) {
            button.classList.add('tool--selected')
        }
        if (token.endsWith('+')) {
            button.classList.add('tool--dropdown')
        }
        if (mark) {
            const label = document.createElement('span')
            label.className = 'tool__mark'
            label.textContent = mark
            button.dataset.mark = mark
            button.appendChild(label)
        }
        return button
    }

    document.querySelectorAll('[data-tools]').forEach(toolbar => {
        toolbar.dataset.tools.split(' ').forEach(token => {
            toolbar.appendChild(createTool(token))
        })
    })
</script>
</body>
</html>
```
FILE: styles.css
```
* {
    box-sizing: border-box;
}

body {
    margin: 0;
    height: 100vh;
    display: flex;
    flex-direction: column;
    overflow: hidden;
    background-color: #f0f0f0;
    color: #222;
    font-family: "Open Sans", "Noto Sans CJK SC", sans-serif;
    font-size: 8px;
    line-height: 12px;
}

button {
    margin: 0;
    padding: 0;
    border: 0;
    background: none;
    color: inherit;
    font: inherit;
}

h1,
h2 {
    margin: 0;
    font-size: 8px;
    font-weight: normal;
}

svg {
    fill: none;
    stroke: #555;
}

.sprite {
    position: absolute;
    width: 0;
    height: 0;
}

/* title bar */
.title-bar {
    display: flex;
    align-items: center;
    height: 13px;
    padding: 0 9px 0 2px;
    background-color: #fff;
}

.logo {
    width: 10px;
    height: 10px;
    margin-right: 3px;
}

.window-controls {
    display: flex;
    gap: 20px;
    margin-left: auto;
}

.window-controls button {
    display: flex;
}

.window-controls svg {
    width: 8px;
    height: 8px;
    stroke: #222;
}

/* menus */
.menu-bar {
    display: flex;
    height: 13px;
    background-color: #fff;
}

.menu-bar > button,
.menu-bar__item--selected {
    padding: 0 4px;
    white-space: nowrap;
}

.menu-bar__open {
    position: relative;
}

.menu-bar__item--selected {
    height: 13px;
    background-color: #cce8ff;
}

.menu {
    position: absolute;
    z-index: 2;
    top: 13px;
    left: 0;
    width: 107px;
    padding: 2px 1px;
    border: 1px solid #ccc;
    background-color: #f2f2f2;
    box-shadow: 2px 2px 2px rgba(0, 0, 0, 0.5);
}

.menu hr {
    height: 1px;
    margin: 1px 0 1px 19px;
    border: 0;
    background-color: #d0d0d0;
}

.menu__item {
    display: flex;
    align-items: center;
    justify-content: space-between;
    width: 100%;
    height: 14px;
    padding: 0 7px 0 20px;
    white-space: nowrap;
}

.menu__item--parent::after {
    content: "";
    width: 3px;
    height: 3px;
    border: solid #444;
    border-width: 1px 1px 0 0;
    transform: rotate(45deg);
}

.menu__item--selected {
    background-color: #91c9f7;
}

.menu__group {
    position: relative;
}

.menu--sub {
    top: -2px;
    left: 103px;
    width: 85px;
    padding: 1px;
}

/* toolbars */
.toolbars {
    padding-top: 1px;
}

.toolbar-row {
    display: grid;
    height: 24px;
}

.toolbar-row--bit {
    grid-template-columns: 836px;
    padding-left: 38px;
}

.toolbar-row--curves {
    grid-template-columns: 396px 181px 29px;
}

.toolbar-row--suapp {
    grid-template-columns: 200px 637px 93px 92px 71px;
}

.toolbar-row--main {
    grid-template-columns: 567px 160px 134px 118px 94px 28px 71px;
}

.toolbar {
    position: relative;
    display: flex;
    padding: 1px 0 1px 6px;
    border-right: 1px solid #ccc;
    border-bottom: 1px solid #d0d0d0;
    background-color: #f3f3f3;
}

.toolbar::before {
    content: "";
    position: absolute;
    top: 3px;
    bottom: 3px;
    left: 3px;
    border-left: 1px dotted #aaa;
}

.toolbar__separator {
    width: 1px;
    margin: 0 2px;
    background-color: #aaa;
}

.tool {
    position: relative;
    display: flex;
    flex: 1 1 21px;
    align-items: center;
    justify-content: center;
    min-width: 0;
}

.tool--selected {
    outline: 1px solid #a6d3f3;
    outline-offset: -1px;
    background-color: #cce8ff;
}

.tool--dropdown {
    flex-basis: 35px;
    padding-right: 14px;
}

.tool--dropdown::after {
    content: "";
    position: absolute;
    top: 8px;
    right: 5px;
    border: 3px solid transparent;
    border-top: 4px solid #000;
}

.tool__mark {
    position: absolute;
    top: 0;
    right: 0;
    color: #222;
    font: bold 8px/8px "Liberation Mono", monospace;
}

.tool--plate {
    color: #8b6842;
}

.tool--plate:not([data-mark])::after {
    content: "";
    position: absolute;
    right: 1px;
    bottom: 1px;
    border: 4px solid transparent;
    border-top: 5px solid #000;
    border-bottom: 0;
}

.tool[data-mark="="] {
    color: #333;
}

.tool[data-mark="J"],
.tool[data-mark="J"] .tool__mark {
    color: #2626d8;
}

.tool[data-mark="R"],
.tool[data-mark="R"] .tool__mark {
    color: #dc4444;
}

.tool[data-mark="V"],
.tool[data-mark="V"] .tool__mark {
    color: #24c536;
}

.tool[data-mark="X"],
.tool[data-mark="X"] .tool__mark {
    color: #f28020;
}

.tool[data-mark="F"],
.tool[data-mark="F"] .tool__mark {
    color: #c923d6;
}

.tool--text .tool__mark {
    top: 4px;
    right: 5px;
    font: bold 6px/8px "Liberation Serif", serif;
}

.tool--wordmark {
    flex-direction: column;
}

.tool--wordmark .tool__mark {
    position: static;
    color: #d71920;
    font: bold 10px/8px "Liberation Sans", sans-serif;
}

.tool--wordmark::after {
    content: "APP";
    color: #a67560;
    font: bold 7px/7px "Liberation Sans", sans-serif;
}

.icon {
    flex: none;
    width: 15px;
    height: 15px;
}

.icon--plate {
    width: 18px;
    height: 18px;
}

.icon--tree,
.icon--sandbox {
    width: 20px;
    height: 20px;
}

/* icon paints */
.ink { fill: #111; stroke: none; }
.red { fill: #d71920; stroke: #8a1a1f; stroke-width: 0.4; }
.green { fill: #22884d; stroke: #175c34; stroke-width: 0.4; }
.blue { fill: #2580d0; stroke: #174f83; stroke-width: 0.5; }
.sky { fill: #9bc8eb; stroke: #345774; }
.white { fill: #fff; stroke-width: 0.9; }
.grey { fill: #b8b8b5; stroke-width: 0.8; }
.dark { fill: #666; stroke-width: 0.8; }
.stone { fill: #9a9a84; stroke: #66665a; }
.dark-stone { fill: #74756a; stroke: #333; stroke-width: 0.8; }
.ink-line { stroke: #111; }
.red-line { stroke: #d72c35; }
.pink-line { stroke: #e88488; }
.blue-line { stroke: #4040bb; stroke-width: 1.4; }
.pale-line { stroke: #ddd; }

/* workspace */
.workspace {
    display: flex;
    flex: 1;
    min-height: 0;
}

.side-tools {
    flex: none;
    width: 46px;
    padding-top: 34px;
    border-right: 2px solid #929292;
    overflow: hidden;
}

.toolbar--side {
    display: grid;
    grid-template-columns: 21px 21px;
    grid-auto-rows: auto;
    padding: 5px 0 0 2px;
    border: 0;
}

.toolbar--side::before {
    top: 1px;
    right: 2px;
    bottom: auto;
    left: 2px;
    border-top: 1px dotted #aaa;
    border-left: 0;
}

.toolbar--side .tool {
    height: 21px;
}

.toolbar--side .toolbar__separator {
    grid-column: 1 / -1;
    width: auto;
    height: 1px;
    margin: 3px 0 2px;
}

.viewport {
    flex: 1;
    min-width: 0;
    border-top: 1px solid #3b86ab;
    background-color: #c0bfc5;
}

.scene {
    display: block;
    width: 100%;
    height: 100%;
}

.axis {
    stroke-width: 1;
}

.axis--red { stroke: #b8283a; }
.axis--green { stroke: #23a436; }
.axis--blue { stroke: #2929b8; }

.axis--dotted {
    stroke-dasharray: 1 2;
}

/* tray */
.tray {
    flex: none;
    width: 178px;
    padding: 0 1px 0 0;
    border-left: 4px solid #f0f0f0;
    background-color: #f5f6fb;
}

.tray__header {
    display: flex;
    align-items: center;
    gap: 7px;
    height: 11px;
    padding-left: 2px;
    background-color: #cddceb;
}

.tray__header h2 {
    flex: 1;
}

.tray__pin {
    display: flex;
}

.tray__pin svg {
    width: 7px;
    height: 7px;
    stroke: #111;
}

.tray__close {
    width: 8px;
    height: 8px;
    background-color: #cf4752;
    color: #fff;
    line-height: 8px;
}

.tray__item {
    display: flex;
    align-items: center;
    justify-content: space-between;
    height: 11px;
    margin-top: 1px;
    background-image: linear-gradient(#e6e6e6, #bababa);
}

.tray__title {
    display: flex;
    align-items: center;
    flex: 1;
    gap: 4px;
    padding-left: 5px;
}

.tray__title::before {
    content: "";
    border: 3px solid transparent;
    border-right: 0;
    border-left: 4px solid #111;
}

.tray__x {
    width: 9px;
    height: 9px;
    background-color: #e8e8e8;
    line-height: 8px;
}

/* red callout drawn above everything */
.pointer {
    position: absolute;
    z-index: 3;
    top: 0;
    left: 0;
    width: 100%;
    pointer-events: none;
    stroke: #e0323b;
}

.pointer circle {
    fill: #e0323b;
}
```
